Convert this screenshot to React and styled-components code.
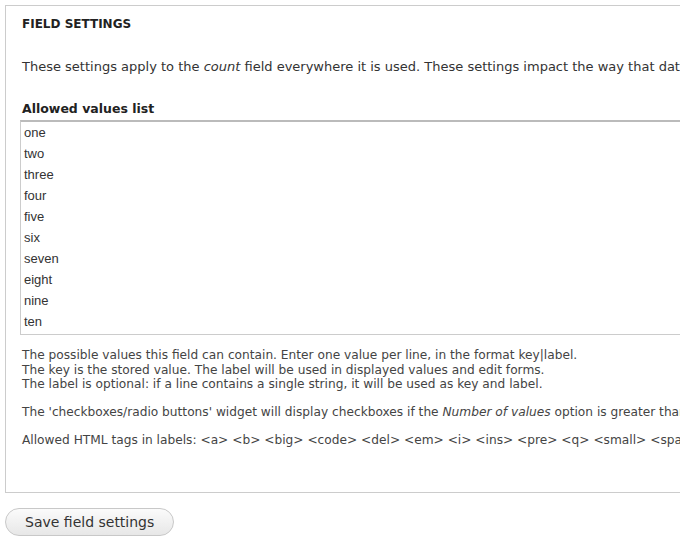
import React from "react";
import styled, { createGlobalStyle } from "styled-components";

const VALUES = ["one", "two", "three", "four", "five", "six", "seven", "eight", "nine", "ten"];

const GlobalStyle = createGlobalStyle`
  html, body {
    margin: 0;
    padding: 0;
    overflow: hidden;
    background: #fff;
  }
  body {
    font-family: "DejaVu Sans", "Noto Sans", sans-serif;
    color: #333;
  }
`;

const Page = styled.div`
  width: 1100px;
  padding: 5px 0 0 5px;
`;

const Fieldset = styled.section`
  border: 1px solid #ccc;
  padding: 10px 16px 40px 16px;
  height: 488px;
  box-sizing: border-box;
`;

const Legend = styled.h2`
  margin: 0;
  font-size: 12px;
  font-weight: bold;
  color: #222;
  line-height: 16px;
`;

const Intro = styled.p`
  margin: 26px 0 0;
  font-size: 13px;
  line-height: 17px;
  white-space: nowrap;
`;

const Label = styled.label`
  display: block;
  margin: 26px 0 3px;
  font-size: 12.5px;
  font-weight: bold;
  line-height: 16px;
  color: #222;
`;

const ValuesBox = styled.div`
  margin-left: -2px;
  border: 1px solid #ccc;
  border-top: 2px solid #bbb;
  padding: 0 3px 7px;
  font-family: "Liberation Sans", Arial, sans-serif;
  font-size: 13px;
  line-height: 21px;
  color: #333;
  height: 215px;
  box-sizing: border-box;
`;

const Help = styled.div`
  margin-top: 13px;
  font-size: 12.2px;
  line-height: 14.5px;
  color: #444;
  white-space: nowrap;

  p { margin: 0 0 13.5px; }
`;

const SaveButton = styled.button`
  margin-top: 15px;
  height: 28px;
  padding: 0 19px;
  border: 1px solid #c8c8c8;
  border-radius: 14px;
  background: linear-gradient(#fbfbfb, #e7e7e7);
  font-family: "DejaVu Sans", sans-serif;
  font-size: 14px;
  color: #333;
`;

export default function App() {
  return (
    <Page>
      <GlobalStyle />
      <Fieldset>
        <Legend>FIELD SETTINGS</Legend>
        <Intro>
          These settings apply to the <em>count</em> field everywhere it is used. These settings
          impact the way that data is stored in the database and cannot be changed once data has been created.
        </Intro>
        <Label>Allowed values list</Label>
        <ValuesBox>
          {VALUES.map((v) => (
            <div key={v}>{v}</div>
          ))}
        </ValuesBox>
        <Help>
          <p>
            The possible values this field can contain. Enter one value per line, in the format key|label.
            <br />
            The key is the stored value. The label will be used in displayed values and edit forms.
            <br />
            The label is optional: if a line contains a single string, it will be used as key and label.
          </p>
          <p>
            The 'checkboxes/radio buttons' widget will display checkboxes if the <em>Number of values</em>{" "}
            option is greater than 1 for this field, otherwise radios will be displayed.
          </p>
          <p>
            Allowed HTML tags in labels: &lt;a&gt; &lt;b&gt; &lt;big&gt; &lt;code&gt; &lt;del&gt; &lt;em&gt;
            &lt;i&gt; &lt;ins&gt; &lt;pre&gt; &lt;q&gt; &lt;small&gt; &lt;span&gt; &lt;strong&gt; &lt;sub&gt;
            &lt;sup&gt; &lt;tt&gt; &lt;ol&gt; &lt;ul&gt; &lt;li&gt; &lt;p&gt; &lt;br&gt; &lt;img&gt;
          </p>
        </Help>
      </Fieldset>
      <SaveButton>Save field settings</SaveButton>
    </Page>
  );
}
